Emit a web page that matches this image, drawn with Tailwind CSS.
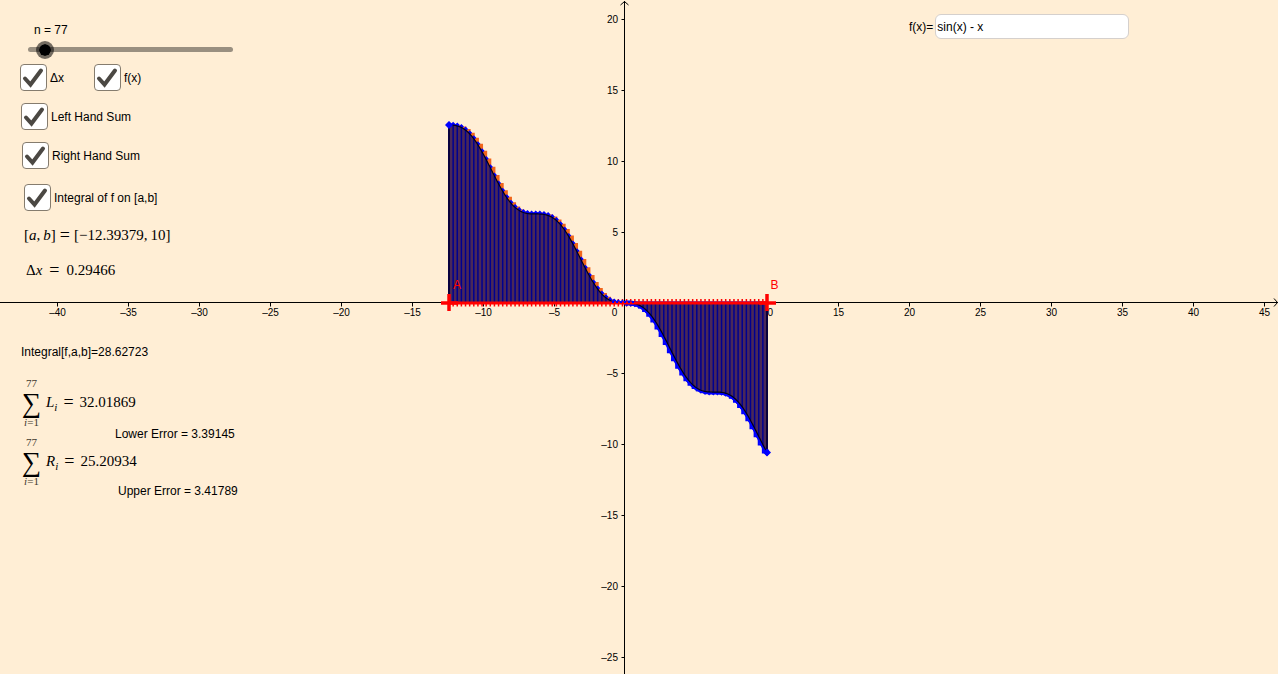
<!DOCTYPE html>
<html lang="en">
<head>
    <meta charset="UTF-8">
    <meta name="viewport" content="width=device-width, initial-scale=1.0">
    <title>Left and Right Hand Sums</title>
    <script src="https://cdn.jsdelivr.net/npm/@tailwindcss/browser@4"></script>
</head>
<body class="h-screen overflow-hidden bg-white pr-0.5 pb-0.5 font-['Liberation_Sans',sans-serif] text-xs text-black">
    <main class="relative h-full bg-[#ffeed5]">
        <!-- Graphics view, filled in by the script below -->
        <svg id="plot" class="absolute inset-0 h-full w-full" role="img" aria-label="Graph of f with left and right sums"></svg>

        <!-- Controls and results -->
        <section class="relative flex w-64 flex-col pl-5 pt-[22px]">
            <label for="n" class="pl-3.5 leading-4">n = 77</label>
            <input type="range" id="n" min="1" max="1700" value="77"
                   class="mt-[9px] ml-2 h-[5px] w-[205px] appearance-none rounded-full bg-[#998f80] [&::-webkit-slider-thumb]:box-border [&::-webkit-slider-thumb]:size-[18px] [&::-webkit-slider-thumb]:appearance-none [&::-webkit-slider-thumb]:rounded-full [&::-webkit-slider-thumb]:border-3 [&::-webkit-slider-thumb]:border-black/55 [&::-webkit-slider-thumb]:bg-black [&::-webkit-slider-thumb]:bg-clip-padding">

            <div class="mt-3 flex">
                <label class="flex w-[74px] items-center gap-[3px]">
                    <span class="grid">
                        <input type="checkbox" checked class="peer col-start-1 row-start-1 size-[27px] appearance-none rounded-[4px] border border-[#857c6e] bg-white">
                        <svg class="pointer-events-none invisible col-start-1 row-start-1 size-[27px] peer-checked:visible" viewBox="0 0 27 27" fill="none" stroke="#4b4843" stroke-width="4"><path d="M5 14.5 L10.5 20.5 L21 6.5" stroke-linecap="round"/></svg>
                    </span>
                    Δx
                </label>
                <label class="flex items-center gap-[3px]">
                    <span class="grid">
                        <input type="checkbox" checked class="peer col-start-1 row-start-1 size-[27px] appearance-none rounded-[4px] border border-[#857c6e] bg-white">
                        <svg class="pointer-events-none invisible col-start-1 row-start-1 size-[27px] peer-checked:visible" viewBox="0 0 27 27" fill="none" stroke="#4b4843" stroke-width="4"><path d="M5 14.5 L10.5 20.5 L21 6.5" stroke-linecap="round"/></svg>
                    </span>
                    f(x)
                </label>
            </div>
            <label class="mt-3 flex items-center gap-[3px] pl-px">
                <span class="grid">
                    <input type="checkbox" checked class="peer col-start-1 row-start-1 size-[27px] appearance-none rounded-[4px] border border-[#857c6e] bg-white">
                    <svg class="pointer-events-none invisible col-start-1 row-start-1 size-[27px] peer-checked:visible" viewBox="0 0 27 27" fill="none" stroke="#4b4843" stroke-width="4"><path d="M5 14.5 L10.5 20.5 L21 6.5" stroke-linecap="round"/></svg>
                </span>
                Left Hand Sum
            </label>
            <label class="mt-3 flex items-center gap-[3px] pl-0.5">
                <span class="grid">
                    <input type="checkbox" checked class="peer col-start-1 row-start-1 size-[27px] appearance-none rounded-[4px] border border-[#857c6e] bg-white">
                    <svg class="pointer-events-none invisible col-start-1 row-start-1 size-[27px] peer-checked:visible" viewBox="0 0 27 27" fill="none" stroke="#4b4843" stroke-width="4"><path d="M5 14.5 L10.5 20.5 L21 6.5" stroke-linecap="round"/></svg>
                </span>
                Right Hand Sum
            </label>
            <label class="mt-[15px] flex items-center gap-[3px] pl-1">
                <span class="grid">
                    <input type="checkbox" checked class="peer col-start-1 row-start-1 size-[27px] appearance-none rounded-[4px] border border-[#857c6e] bg-white">
                    <svg class="pointer-events-none invisible col-start-1 row-start-1 size-[27px] peer-checked:visible" viewBox="0 0 27 27" fill="none" stroke="#4b4843" stroke-width="4"><path d="M5 14.5 L10.5 20.5 L21 6.5" stroke-linecap="round"/></svg>
                </span>
                Integral of f on [a,b]
            </label>

            <div class="mt-3.5 flex gap-1 pl-1 font-['Liberation_Serif',serif] text-[15px] leading-5">
                <span>[<i>a</i>,&thinsp;<i>b</i>]</span><span class="text-lg leading-5">=</span><span>[−12.39379,&thinsp;10]</span>
            </div>
            <div class="mt-[15px] flex gap-[7px] pl-1.5 font-['Liberation_Serif',serif] text-[15px] leading-5">
                <span>Δ<i>x</i></span><span class="text-lg leading-5">=</span><span>0.29466</span>
            </div>

            <p class="mt-16 pl-px leading-4">Integral[f,a,b]=28.62723</p>

            <div class="mt-[18px] flex items-center gap-[3px] font-['Liberation_Serif',serif] text-[15px]">
                <div class="flex w-[23px] flex-col items-center text-[11px] text-[#40392f]">
                    <span class="leading-[11px]">77</span>
                    <span class="text-[27px] leading-[28px] text-black">∑</span>
                    <span class="leading-[10px]"><i>i</i>=1</span>
                </div>
                <div class="flex gap-1.5 leading-5"><span><i>L</i><i class="align-sub text-[11px] leading-none">i</i></span><span class="text-lg leading-5">=</span><span>32.01869</span></div>
            </div>
            <p class="h-[10px] pl-[95px] leading-[14px]">Lower Error = 3.39145</p>
            <div class="flex items-center gap-[3px] font-['Liberation_Serif',serif] text-[15px]">
                <div class="flex w-[23px] flex-col items-center text-[11px] text-[#40392f]">
                    <span class="leading-[11px]">77</span>
                    <span class="text-[27px] leading-[28px] text-black">∑</span>
                    <span class="leading-[10px]"><i>i</i>=1</span>
                </div>
                <div class="flex gap-1.5 leading-5"><span><i>R</i><i class="align-sub text-[11px] leading-none">i</i></span><span class="text-lg leading-5">=</span><span>25.20934</span></div>
            </div>
            <p class="pl-[98px] leading-[10px]">Upper Error = 3.41789</p>
        </section>

        <!-- Function input -->
        <div class="absolute top-3.5 left-[909px] flex items-center gap-0.5">
            <label for="fx">f(x)=</label>
            <input type="text" id="fx" value="sin(x) - x" class="h-[25px] w-[194px] rounded-md border border-[#d5d0cd] bg-white px-px">
        </div>
    </main>

    <script>
        const svg = document.getElementById('plot');
        // The body keeps a 2px white edge on the right and at the bottom
        const W = window.innerWidth - 2, H = window.innerHeight - 2;
        const AX = 624.5, AY = 302.5;
        const OX = 625, OY = 303, UNIT_X = 14.2, UNIT_Y = 14.17;
        const A = -12.39379, B = 10, N = 77;
        const dx = (B - A) / N;
        const f = x => Math.sin(x) - x;
        const px = x => OX + x * UNIT_X;
        const py = y => OY - y * UNIT_Y;
        let out = '';

        // Axes with arrow heads
        out += `<path d="M0 ${AY}H${W}M${AX} ${H}V1M${W - 4} ${AY - 4}L${W - 0.5} ${AY}L${W - 4} ${AY + 4}M${AX - 4} 5L${AX} 1.5L${AX + 4} 5" fill="none" stroke="#000"/>`;

        // Ticks and numbers
        const label = v => v < 0 ? '–' + (-v) : v;
        for (let v = -40; v <= 45; v += 5) {
            const x = Math.floor(px(v)) + 0.5;
            if (v === 0) {
                out += `<text x="614.5" y="316" text-anchor="middle">0</text>`;
                continue;
            }
            out += `<path d="M${x} ${AY}v4" stroke="#000"/><text x="${x}" y="316" text-anchor="middle">${label(v)}</text>`;
        }
        for (let v = -25; v <= 20; v += 5) {
            if (v === 0) continue;
            const y = Math.floor(py(v)) + 0.5;
            out += `<path d="M${AX} ${y}h-3" stroke="#000"/><text x="618" y="${y + 3.5}" text-anchor="end">${label(v)}</text>`;
        }

        // Left bars, right bars, then the integral area
        let left = '', right = '', curve = '', below = '', lines = '', dots = '', marks = '';
        for (let i = 0; i < N; i++) {
            const x0 = A + i * dx, x1 = x0 + dx;
            left += `M${px(x0)} ${AY}V${py(f(x0))}H${px(x1)}V${AY}Z`;
            right += `M${px(x0)} ${AY}V${py(f(x1))}H${px(x1)}V${AY}Z`;
        }
        for (let i = 0; i <= N; i++) {
            const x = px(A + i * dx), y = py(f(A + i * dx));
            lines += `M${x} ${AY}V${y}`;
            // Dots sit on the outer side of the curve
            const c = A + i * dx < 0 ? y - 1 : y + 1;
            dots += `M${x - 2.5} ${c}l2.5 -2.5l2.5 2.5l-2.5 2.5Z`;
            marks += `M${x} ${AY - 3.5}v7.5`;
        }
        for (let x = A; x < B; x += 0.05) {
            curve += `L${px(x)} ${py(f(x))}`;
            if (x > 0) below += `L${px(x)} ${py(f(x))}`;
        }
        curve = 'M' + curve.slice(1) + `L${px(B)} ${py(f(B))}`;
        below = 'M' + below.slice(1) + `L${px(B)} ${py(f(B))}`;

        out += `<path d="${marks}" stroke="#f00" stroke-width="1.5"/>`;
        out += `<path d="${left}" fill="#f0661c" stroke="#f0661c" stroke-width="2"/>`;
        out += `<path d="${right}" fill="none" stroke="#00f" stroke-width="2"/>`;
        out += `<path d="${below}" fill="none" stroke="#00f" stroke-width="5"/>`;
        out += `<path d="${dots}" fill="#00f"/>`;
        out += `<path d="${curve}V${AY}H${px(A)}Z" fill="#4a2858"/>`;
        out += `<path d="${lines}" stroke="#000090" stroke-width="1.5"/>`;
        out += `<path d="${curve}" fill="none" stroke="#000018" stroke-width="1.2"/>`;

        // End points of the graph and sides of the area
        out += `<path d="M${px(A)} ${AY}V${py(f(A))}M${px(B)} ${AY}V${py(f(B))}" stroke="#0a0020" stroke-width="1.5"/>`;
        for (const x of [A, B]) {
            out += `<path d="M${px(x) - 4} ${py(f(x))}l4 -4l4 4l-4 4Z" fill="#00f"/>`;
        }

        // Interval a..b on the x axis
        out += `<path d="M${px(A)} 303H${px(B)}" stroke="#f00" stroke-width="3"/>`;
        for (const x of [A, B]) {
            out += `<path d="M${px(x) - 8} 303h17M${px(x)} 294v17" stroke="#f00" stroke-width="3.5"/>`;
        }
        // Blue points where the graph crosses the axis
        out += `<path d="M612 302h22" stroke="#00f" stroke-width="2" stroke-dasharray="2 2"/>`;
        out += `<text x="453" y="289" fill="#f00" font-size="12">A</text><text x="770.5" y="289" fill="#f00" font-size="12">B</text>`;

        svg.innerHTML = `<g font-size="10">${out}</g>`;
    </script>
</body>
</html>
